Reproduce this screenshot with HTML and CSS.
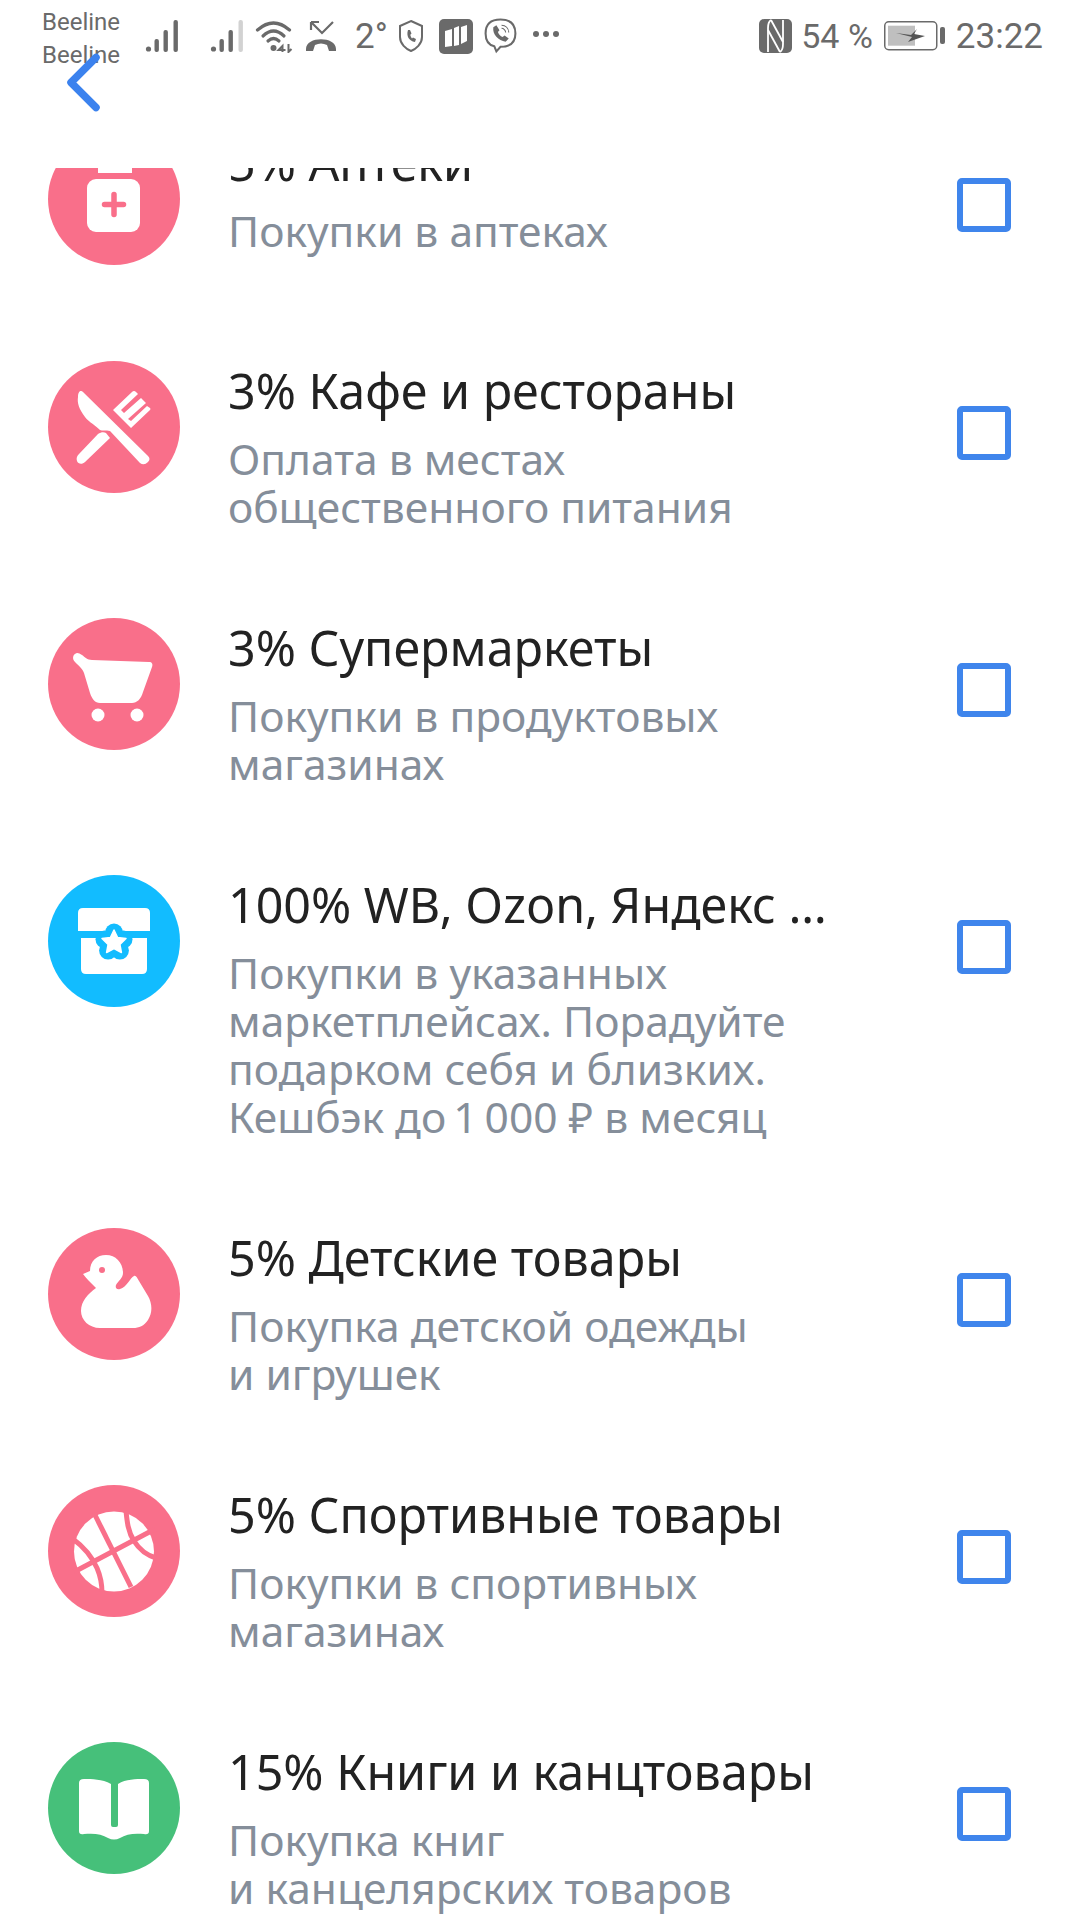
FILE: index.html
```html
<!DOCTYPE html>
<html lang="ru">
<head>
<meta charset="utf-8">
<title>Кешбэк</title>
<link rel="stylesheet" href="styles.css">
</head>
<body>
<div class="screen">
  <header class="header">
    <div class="status">
      <div class="carriers"><span>Beeline</span><span>Beeline</span></div>
      <svg class="sig sig-a" viewBox="0 0 34 34"><g fill="#6a6a6a"><circle cx="3" cy="30" r="2.6"/><rect x="9" y="20" width="4.4" height="13" rx="2"/><rect x="18" y="11" width="4.4" height="22" rx="2"/><rect x="28" y="1" width="4.4" height="32" rx="2"/></g></svg>
      <svg class="sig sig-b" viewBox="0 0 34 34"><g fill="#6a6a6a"><circle cx="3" cy="30" r="2.6"/><rect x="9" y="20" width="4.4" height="13" rx="2"/><rect x="18" y="11" width="4.4" height="22" rx="2"/></g><rect x="28" y="1" width="4.4" height="32" rx="2" fill="#d2d2d2"/></svg>
      <svg class="wifi" viewBox="0 0 38 34"><g fill="none" stroke="#6a6a6a" stroke-width="3.2" stroke-linecap="round"><path d="M2 11 Q18 -3 34 11"/><path d="M7.5 17 Q18 7 28.500 17"/><path d="M12.500 22 Q18 17 23.500 22"/></g><circle cx="18" cy="29" r="3" fill="#6a6a6a"/><path d="M27 33 v-6 l-4 4 h7 M33 25 v8 l3 -3" fill="none" stroke="#6a6a6a" stroke-width="2"/></svg>
      <svg class="missed" viewBox="0 0 32 34"><path d="M6 3 V11 M6 3 H14 M6 3 L17 14 L28 3" fill="none" stroke="#6a6a6a" stroke-width="2.200"/><path d="M1 30 C1 17 31 17 31 30 L31 32 L24 32 L22 26 C18 24 14 24 10 26 L8 32 L1 32 Z" fill="#6a6a6a"/></svg>
      <span class="temp">2°</span>
      <svg class="shield" viewBox="0 0 26 34"><path d="M13 2 L24 7 V18 C24 25 18 30 13 32 C8 30 2 25 2 18 V7 Z" fill="none" stroke="#6a6a6a" stroke-width="2"/><path d="M10 11 C8 17 11 22 17 23 L18 20 L15 18.500 L14 19.500 C13 18 12 16.500 12.500 15.500 L13.500 14.500 L12 11 Z" fill="#6a6a6a"/></svg>
      <svg class="msapp" viewBox="0 0 34 35"><rect width="34" height="35" rx="5" fill="#6a6a6a"/><path d="M6 12 L13 10 V27 L6 28 Z M15 9 L20 7 V26 L15 27 Z M22 8 L28 6 V22 L22 25 Z" fill="#fff"/></svg>
      <svg class="viber" viewBox="0 0 32 35"><path d="M16 1.500 C26 1.500 30.500 6 30.500 15 C30.500 24 26 28 16 28 L12 32.500 L10 27.500 C4 26 1.500 22 1.500 15 C1.500 6 6 1.500 16 1.500 Z" fill="none" stroke="#6a6a6a" stroke-width="2"/><path d="M9 9 C8 16 14 22 21 23 L24 20 L20 17 L18 18.500 C16 17.500 14 15.500 13.500 13.500 L15 12 L12 7 Z" fill="#6a6a6a"/><path d="M17 7 C21 7 24 10 24 14 M17 10 C19 10 21 12 21 14" fill="none" stroke="#6a6a6a" stroke-width="1"/></svg>
      <span class="more"><i></i><i></i><i></i></span>
      <span class="status-spacer"></span>
      <svg class="nfc" viewBox="0 0 33 34"><rect width="33" height="34" rx="5" fill="#6a6a6a"/><g fill="none" stroke="#fff" stroke-width="1.800"><path d="M12 1 C9 3 9 6 9 9 V33"/><path d="M9 11 L21 33"/><path d="M21 33 C24 31 24 28 24 25 V1"/><path d="M24 23 L12 1"/></g></svg>
      <span class="batt-text">54 %</span>
      <svg class="battery" viewBox="0 0 61 30"><rect x="0.750" y="0.750" width="52" height="28" rx="4" fill="#fff" stroke="#6a6a6a" stroke-width="1.500"/><rect x="4" y="4.700" width="27" height="20" fill="#bfbfbf"/><path d="M12 12 L27 14 L33 8 L30 13 L41 15 L24 21 L28 16 Z" fill="#555"/><rect x="56" y="6" width="5" height="17" rx="2" fill="#6a6a6a"/></svg>
      <span class="clock">23:22</span>
    </div>
    <svg class="back" viewBox="0 0 36 60"><path d="M31 4.500 L6 29.500 L31 54.500" fill="none" stroke="#3b82ee" stroke-width="7.500" stroke-linecap="round" stroke-linejoin="round"/></svg>
  </header>

  <main class="viewport">
    <div class="list">
      <section class="row row-first">
        <div class="badge pink">
          <svg viewBox="0 0 132 132"><rect x="50" y="30" width="34" height="10" fill="#fff"/><rect x="39" y="46" width="53" height="53" rx="9" fill="#fff"/><path d="M66 62 V82 M56.500 72 H75.500" stroke="#f96f8a" stroke-width="5.500" stroke-linecap="round" transform="translate(0 -0.500)"/></svg>
        </div>
        <div class="body">
          <h2 class="title">5% Аптеки</h2>
          <p class="sub">Покупки в аптеках</p>
        </div>
        <span class="check"></span>
      </section>

      <section class="row">
        <div class="badge pink">
          <svg viewBox="0 0 132 132"><g fill="#fff"><path d="M35 31 L100 95 Q103 98 100 101 Q96 105 92 102 L62 70 C58 69 54 70 52 69 C44 62 40 60 37 56 C31 48 29 42 30 36 C30 30 33 29 35 31 Z"/><path d="M50 73 C53 71 56 71 58 72 L62 77 L37 101 C34 104 30 103 29 100 C28 97 29 95 31 93 Z"/><path d="M65 49 L84 31 Q86 29 88 31 L90 33 L73 49 L76 52 L93 37 L98 42 L80 58 L83 60 L99 45 L102 47 Q103 48 102 49 L83 67 Z"/></g></svg>
        </div>
        <div class="body">
          <h2 class="title">3% Кафе и рестораны</h2>
          <p class="sub">Оплата в местах<br>общественного питания</p>
        </div>
        <span class="check"></span>
      </section>

      <section class="row">
        <div class="badge pink">
          <svg viewBox="0 0 132 132"><g fill="#fff"><path d="M27 44 C24 41 25 37 27 36 C29 34 31 35 34 37 C37 39 39 42 44 42 L101 44 C104 44 105 46 104 49 L95 74 C93 81 89 85 84 85 L52 85 C47 85 44 81 42 75 L36 55 C34 50 31 48 27 44 Z"/><circle cx="50" cy="97" r="6.500"/><circle cx="89" cy="97" r="6.500"/></g></svg>
        </div>
        <div class="body">
          <h2 class="title">3% Супермаркеты</h2>
          <p class="sub">Покупки в продуктовых<br>магазинах</p>
        </div>
        <span class="check"></span>
      </section>

      <section class="row">
        <div class="badge blue">
          <svg viewBox="0 0 132 132"><g fill="#fff"><path d="M35 33 H97 Q102 33 102 38 V56 H30 V38 Q30 33 35 33 Z"/><path d="M33 63 H99 V94 Q99 99 94 99 H38 Q33 99 33 94 Z"/></g><g fill="#12bcff"><circle cx="66" cy="68" r="12"/><circle cx="66" cy="57.500" r="9"/><circle cx="75.500" cy="64.400" r="9"/><circle cx="71.900" cy="75.600" r="9"/><circle cx="60.100" cy="75.600" r="9"/><circle cx="56.500" cy="64.400" r="9"/></g><path d="M66 55 L69.600 62.500 L78 63.500 L71.900 69.400 L73.400 77.500 L66 73.700 L58.600 77.500 L60.100 69.400 L54 63.500 L62.400 62.500 Z" fill="#fff" stroke="#fff" stroke-width="1.500" stroke-linejoin="round"/></svg>
        </div>
        <div class="body">
          <h2 class="title">100% WB, Ozon, Яндекс …</h2>
          <p class="sub">Покупки в указанных<br>маркетплейсах. Порадуйте<br>подарком себя и близких.<br>Кешбэк до&#8201;1&#8201;000 ₽ в месяц</p>
        </div>
        <span class="check"></span>
      </section>

      <section class="row">
        <div class="badge pink">
          <svg viewBox="0 0 132 132"><path d="M35 46 L42 43 C42 33 49 27 58 27 C68 27 75 35 75 45 C75 50 70 53 68 57 C67 60 69 62 72 61 C79 59 82 50 86 48 C88 47 89 50 91 53 L100 68 C104 75 105 84 100 92 C96 98 91 100 85 100 H52 C41 100 33 92 33 83 C33 73 40 66 48 60 C43 55 38 50 35 46 Z" fill="#fff"/><circle cx="54" cy="42" r="3" fill="#f96f8a"/></svg>
        </div>
        <div class="body">
          <h2 class="title">5% Детские товары</h2>
          <p class="sub">Покупка детской одежды<br>и игрушек</p>
        </div>
        <span class="check"></span>
      </section>

      <section class="row">
        <div class="badge pink">
          <svg viewBox="0 0 132 132"><circle cx="66" cy="66.500" r="40" fill="#fff"/><g fill="none" stroke="#f96f8a" stroke-width="5"><path d="M46 28 L83 102"/><path d="M26 87 L107 44"/><path d="M78 26 C79 36 80 47 86 56 C91 64 98 70 108 73"/><path d="M25 54 C36 62 44 72 49 83 C52 90 54 98 54 108"/></g></svg>
        </div>
        <div class="body">
          <h2 class="title">5% Спортивные товары</h2>
          <p class="sub">Покупки в спортивных<br>магазинах</p>
        </div>
        <span class="check"></span>
      </section>

      <section class="row">
        <div class="badge green">
          <svg viewBox="0 0 132 132"><path d="M36 37 C44 37 54 37 63 42 V83 Q63 85 65 85 H68 Q70 85 70 83 V42 C78 37 88 37 96 37 Q101 37 101 41 V89 Q101 93 96 92 C86 91 78 92 72 96 Q66 99 60 96 C54 92 46 91 36 92 Q31 93 31 89 V41 Q31 37 36 37 Z" fill="#fff"/></svg>
        </div>
        <div class="body">
          <h2 class="title">15% Книги и канцтовары</h2>
          <p class="sub">Покупка книг<br>и канцелярских товаров</p>
        </div>
        <span class="check"></span>
      </section>
    </div>
  </main>
</div>
</body>
</html>
```

FILE: styles.css
```css
* { box-sizing: border-box; }
html, body { margin: 0; padding: 0; background: #fff; }
.screen {
  width: 1080px;
  height: 1920px;
  display: flex;
  flex-direction: column;
  overflow: hidden;
  background: #fff;
  font-family: "Noto Sans", sans-serif;
}
.header { flex: none; height: 168px; position: relative; }
.status {
  display: flex;
  align-items: center;
  height: 72px;
  padding: 0 37px 0 42px;
  color: #6a6a6a;
  font-family: Roboto, sans-serif;
}
.carriers {
  display: flex;
  flex-direction: column;
  width: 103px;
  font-size: 24px;
  line-height: 33px;
  margin-top: 6px;
  flex: none;
}
.sig { width: 35px; height: 34px; flex: none; }
.sig-a { margin-right: 30px; }
.sig-b { margin-right: 10px; }
.wifi { width: 39px; height: 34px; margin-right: 10px; flex: none; }
.missed { width: 34px; height: 34px; flex: none; margin-right: 17px; }
.temp { font-size: 35px; width: 28px; flex: none; margin-right: 15px; white-space: nowrap; }
.shield { width: 26px; height: 34px; flex: none; margin-right: 15px; }
.msapp { width: 34px; height: 35px; flex: none; margin-right: 10px; }
.viber { width: 35px; height: 36px; flex: none; margin-right: 15px; }
.more { display: flex; gap: 4px; margin-top: -4px; }
.more i { width: 6px; height: 6px; border-radius: 50%; background: #6a6a6a; display: block; }
.status-spacer { flex: 1; }
.nfc { width: 33px; height: 34px; flex: none; margin-right: 9px; }
.batt-text { font-size: 34px; margin-right: 11px; white-space: nowrap; }
.battery { width: 61px; height: 30px; flex: none; margin-right: 11px; }
.clock { font-size: 35px; }
.back { position: absolute; left: 65px; top: 53px; width: 36px; height: 60px; }

.viewport { flex: 1; min-height: 0; overflow: hidden; }
.list { margin-top: -35px; }
.row {
  display: flex;
  align-items: flex-start;
  padding: 0 48px 87px;
}
.row-first { min-height: 228px; padding-bottom: 0; }
.badge {
  flex: none;
  width: 132px;
  height: 132px;
  border-radius: 50%;
  margin-right: 48px;
}
.badge svg { display: block; width: 132px; height: 132px; }
.pink { background: #f96f8a; }
.blue { background: #12bcff; }
.green { background: #46c07a; }
.body { flex: 1; min-width: 0; }
.title {
  margin: 0;
  font-weight: 400;
  font-size: 48.400px;
  line-height: 58px;
  color: #222;
  white-space: nowrap;
}
.sub {
  margin: 16px 0 0;
  font-size: 42.500px;
  line-height: 48px;
  color: #858e9a;
}
.check {
  flex: none;
  width: 54px;
  height: 54px;
  margin: 45px 21px 0 0;
  border: 6px solid #3f85ec;
  border-radius: 5px;
}
```
